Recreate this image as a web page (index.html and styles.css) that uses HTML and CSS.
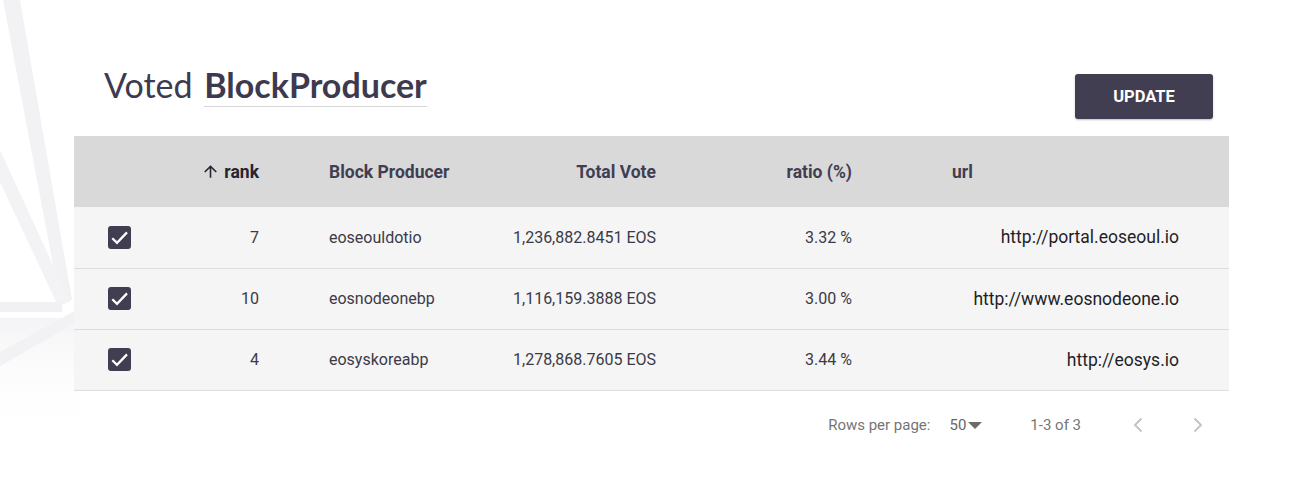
FILE: index.html
```html
<!DOCTYPE html>
<html lang="en">
<head>
<meta charset="utf-8">
<title>Voted BlockProducer</title>
<link rel="stylesheet" href="styles.css">
</head>
<body>
<div class="page">
  <svg class="bg-deco" width="80" height="480" viewBox="0 0 80 480" aria-hidden="true">
    <defs>
      <linearGradient id="fade" x1="0" y1="0" x2="0" y2="1">
        <stop offset="0" stop-color="#f4f4f6" stop-opacity="1"/>
        <stop offset="1" stop-color="#ffffff" stop-opacity="0"/>
      </linearGradient>
    </defs>
    <rect x="0" y="318" width="80" height="120" fill="url(#fade)"/>
    <polygon points="3,0 20,0 72,300 60,302" fill="#f2f2f4"/>
    <polygon points="0,150 0,182 58,306 70,302" fill="#f3f3f5"/>
    <polygon points="0,302 62,302 62,312 0,312" fill="#f1f1f3"/>
    <polygon points="80,308 80,320 0,366 0,352" fill="#f2f2f4"/>
  </svg>

  <main class="content">
    <header class="title-bar">
      <h1 class="title"><span class="title-light">Voted</span> <span class="title-strong">BlockProducer</span></h1>
      <button class="update-btn" type="button">UPDATE</button>
    </header>

    <table class="bp-table">
      <colgroup>
        <col class="col-check">
        <col class="col-rank">
        <col class="col-bp">
        <col class="col-vote">
        <col class="col-ratio">
        <col class="col-url">
      </colgroup>
      <thead>
        <tr>
          <th class="c-check"></th>
          <th class="c-rank c-active"><svg class="sort-icon" width="19" height="19" viewBox="0 0 24 24"><path d="M4 12l1.41 1.41L11 7.83V20h2V7.83l5.58 5.59L20 12l-8-8-8 8z" fill="#26252f"/></svg> rank</th>
          <th class="c-bp">Block Producer</th>
          <th class="c-vote">Total Vote</th>
          <th class="c-ratio">ratio (%)</th>
          <th class="c-url-head">url</th>
        </tr>
      </thead>
      <tbody>
        <tr>
          <td class="c-check"><svg class="checkbox" width="23" height="23" viewBox="0 0 23 23"><rect x="0" y="0" width="23" height="23" rx="3" fill="#413e52"/><path d="M4.3 12.2 L9 16.8 L19 6.4" fill="none" stroke="#fff" stroke-width="2.3"/></svg></td>
          <td class="c-rank">7</td>
          <td class="c-bp">eoseouldotio</td>
          <td class="c-vote">1,236,882.8451 EOS</td>
          <td class="c-ratio">3.32 %</td>
          <td class="c-url">http://portal.eoseoul.io</td>
        </tr>
        <tr>
          <td class="c-check"><svg class="checkbox" width="23" height="23" viewBox="0 0 23 23"><rect x="0" y="0" width="23" height="23" rx="3" fill="#413e52"/><path d="M4.3 12.2 L9 16.8 L19 6.4" fill="none" stroke="#fff" stroke-width="2.3"/></svg></td>
          <td class="c-rank">10</td>
          <td class="c-bp">eosnodeonebp</td>
          <td class="c-vote">1,116,159.3888 EOS</td>
          <td class="c-ratio">3.00 %</td>
          <td class="c-url">http://www.eosnodeone.io</td>
        </tr>
        <tr>
          <td class="c-check"><svg class="checkbox" width="23" height="23" viewBox="0 0 23 23"><rect x="0" y="0" width="23" height="23" rx="3" fill="#413e52"/><path d="M4.3 12.2 L9 16.8 L19 6.4" fill="none" stroke="#fff" stroke-width="2.3"/></svg></td>
          <td class="c-rank">4</td>
          <td class="c-bp">eosyskoreabp</td>
          <td class="c-vote">1,278,868.7605 EOS</td>
          <td class="c-ratio">3.44 %</td>
          <td class="c-url">http://eosys.io</td>
        </tr>
      </tbody>
    </table>

    <div class="pagination">
      <span class="rows-label">Rows per page:</span>
      <span class="rows-select">50<svg class="caret" width="14" height="7" viewBox="0 0 14 7"><path d="M0 0 L14 0 L7 7 z" fill="#6b6b6b"/></svg></span>
      <span class="range">1-3 of 3</span>
      <span class="page-btn"><svg width="24" height="24" viewBox="0 0 24 24"><path d="M15.5 5.5 L9 12 L15.5 18.5" fill="none" stroke="#c4c4c4" stroke-width="2"/></svg></span>
      <span class="page-btn page-next"><svg width="24" height="24" viewBox="0 0 24 24"><path d="M8.5 5.5 L15 12 L8.5 18.5" fill="none" stroke="#c4c4c4" stroke-width="2"/></svg></span>
    </div>
  </main>
</div>
</body>
</html>
```

FILE: styles.css
```css
* { box-sizing: border-box; }

html, body {
  margin: 0;
  padding: 0;
  background: #ffffff;
}

body {
  font-family: Roboto, "Liberation Sans", Arial, sans-serif;
  color: #3b3a47;
}

.page {
  position: relative;
  width: 1302px;
  height: 480px;
  overflow: hidden;
}

.bg-deco {
  position: absolute;
  left: 0;
  top: 0;
  z-index: 0;
}

.content {
  position: relative;
  z-index: 1;
  margin-left: 74px;
  width: 1155px;
}

.title-bar {
  display: flex;
  justify-content: space-between;
  align-items: flex-start;
  height: 136px;
}

.title {
  margin: 65px 0 0 30px;
  font-family: Lato, "Open Sans", sans-serif;
  font-size: 34px;
  line-height: 40px;
  color: #3d3a4f;
  font-weight: 400;
}

.title-light {
  font-weight: 400;
}

.title-strong {
  font-weight: 700;
  margin-left: 3px;
  padding-bottom: 1px;
  border-bottom: 1px solid #d6d6d9;
}

.update-btn {
  margin: 74px 16px 0 0;
  width: 138px;
  height: 45px;
  border: none;
  border-radius: 3px;
  background: #413e52;
  color: #ffffff;
  font-family: Roboto, "Liberation Sans", sans-serif;
  font-weight: 700;
  font-size: 16.5px;
  letter-spacing: 0;
  padding: 0;
  box-shadow: 0 1px 2px rgba(0,0,0,0.25);
}

.bp-table {
  width: 1155px;
  table-layout: fixed;
  border-collapse: collapse;
  border-spacing: 0;
}

.col-check { width: 60px; }
.col-rank { width: 149px; }
.col-bp { width: 197px; }
.col-vote { width: 200px; }
.col-ratio { width: 196px; }
.col-url { width: 353px; }

.bp-table thead tr {
  background: #d9d9d9;
}

.bp-table th {
  height: 71px;
  padding: 0;
  font-size: 17.5px;
  font-weight: 700;
  color: #413e52;
  vertical-align: middle;
  white-space: nowrap;
}

.bp-table th.c-active {
  color: #26252f;
}

.sort-icon {
  display: inline-block;
  vertical-align: -3px;
}

.bp-table tbody tr {
  background: #f5f5f5;
}

.bp-table td {
  height: 61px;
  padding: 0;
  font-size: 16px;
  color: #3b3a47;
  border-bottom: 1px solid #dedede;
  vertical-align: middle;
  white-space: nowrap;
}

.c-check { padding-left: 34px !important; text-align: left; }
.c-check .checkbox { display: block; }

.c-rank { text-align: right; padding-right: 24px !important; }
.c-bp { text-align: left; padding-left: 46px !important; }
.c-vote { text-align: right; padding-right: 24px !important; }
.c-ratio { text-align: right; padding-right: 24px !important; }
.c-url-head { text-align: left; padding-left: 76px !important; }

.bp-table td.c-url {
  text-align: right;
  padding-right: 50px;
  font-size: 17.5px;
  color: #1f1e27;
}

.pagination {
  display: flex;
  justify-content: flex-end;
  align-items: center;
  height: 68px;
  padding-right: 19px;
  font-size: 15px;
  color: #757575;
}

.rows-label {
  margin-right: 19px;
}

.rows-select {
  display: inline-flex;
  align-items: center;
  gap: 2px;
  color: #666666;
  margin-right: 48px;
}

.caret { display: block; margin-top: 1px; }

.range {
  margin-right: 45px;
  color: #757575;
}

.page-btn {
  display: block;
  width: 24px;
  height: 24px;
}

.page-btn svg { display: block; }

.page-next {
  margin-left: 36px;
}
```
